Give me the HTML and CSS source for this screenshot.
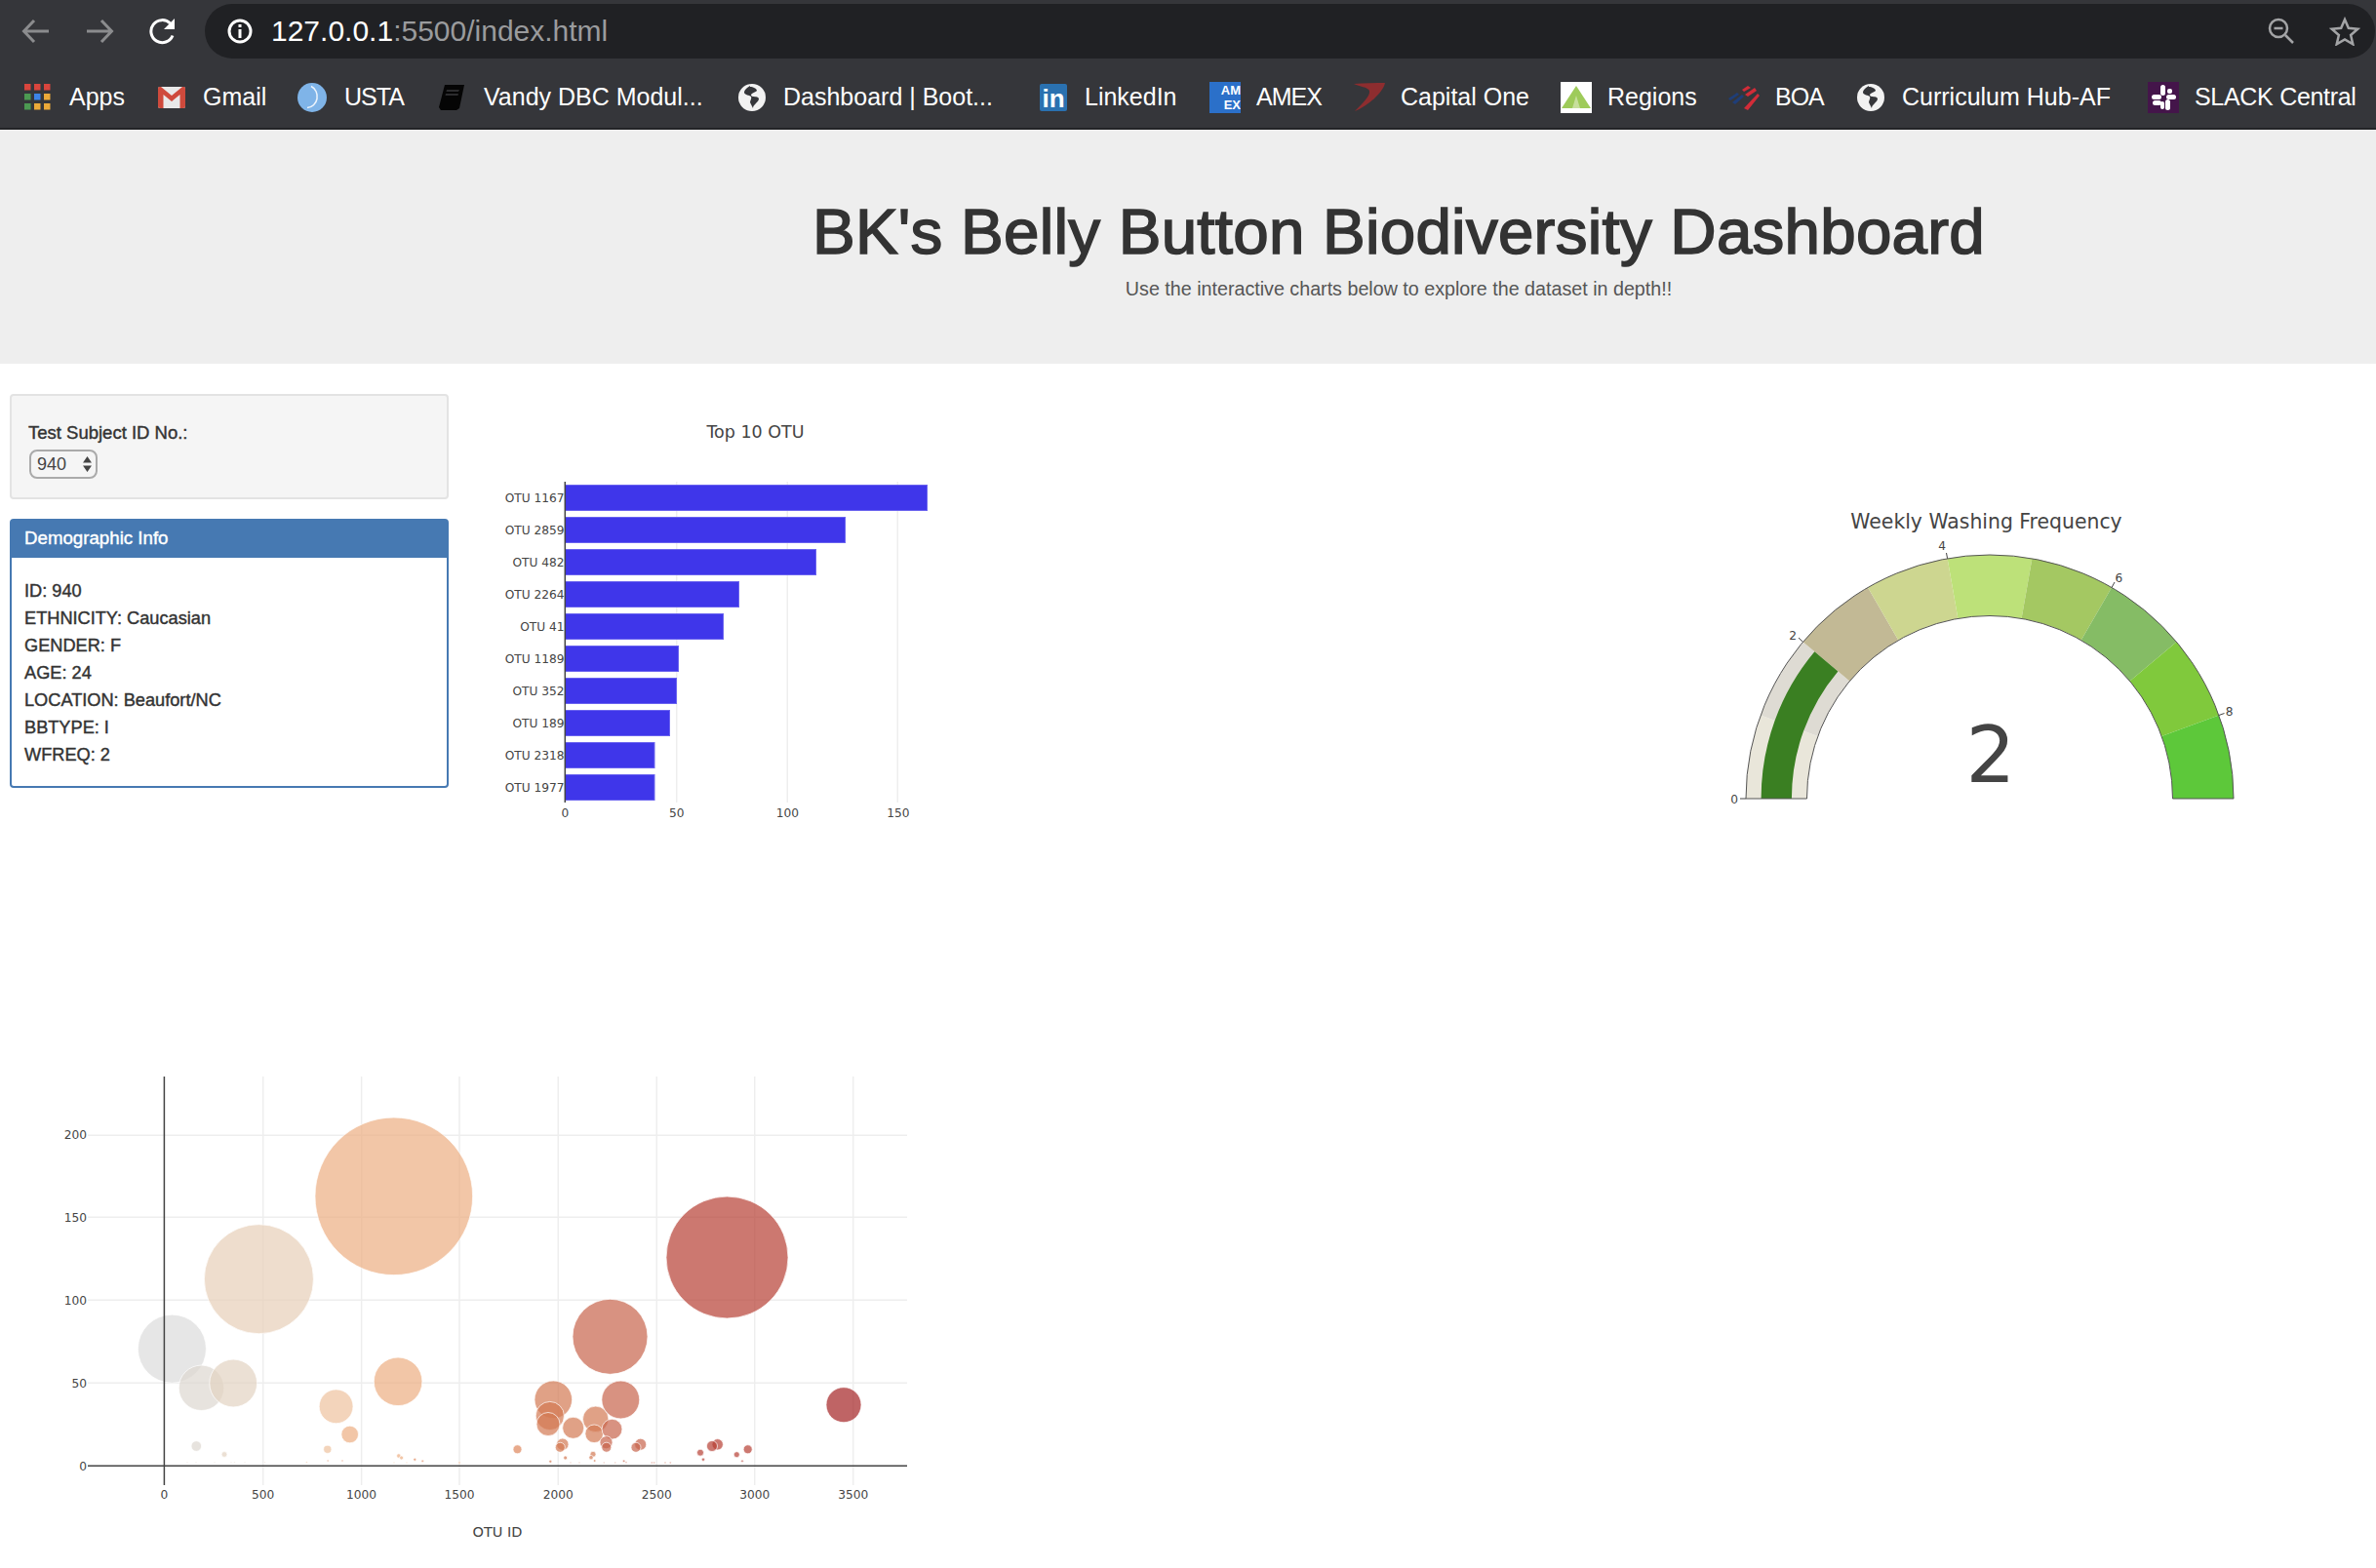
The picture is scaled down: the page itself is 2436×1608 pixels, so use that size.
FILE: index.html
```html
<!DOCTYPE html>
<html lang="en">
<head>
<meta charset="UTF-8">
<meta name="viewport" content="width=device-width, initial-scale=1.0">
<title>Belly Button Biodiversity</title>
<link rel="stylesheet" href="styles.css">
</head>
<body>

<div class="toolbar">
    <svg class="nav-icon" width="30" height="26" viewBox="0 0 30 26"><path class="line-dim" d="M28 13H3M13 2 2.500 13 13 24"/></svg>
    <svg class="nav-icon nav-fwd" width="30" height="26" viewBox="0 0 30 26"><path class="line-dim" d="M2 13H27M17 2 27.500 13 17 24"/></svg>
    <svg class="nav-icon nav-reload" width="30" height="28" viewBox="0 0 30 28"><path class="line-white" d="M25 18.500A11.500 11.500 0 1 1 22.500 6"/><path class="fill-white" d="M27 1V12H16Z"/></svg>
    <div class="omnibox">
        <svg class="info-icon" width="28" height="28" viewBox="0 0 28 28"><circle class="line-white" cx="14" cy="14" r="11"/><path class="fill-white" d="M12.500 12h3v9h-3zM12.500 7h3v3h-3z"/></svg>
        <span class="url">127.0.0.1<span class="url-dim">:5500/index.html</span></span>
        <svg class="zoom-icon" width="30" height="30" viewBox="0 0 30 30"><circle class="line-grey" cx="12" cy="12" r="9"/><path class="line-grey" d="M7.500 12h9M19 19l8 8"/></svg>
        <svg class="star-icon" width="32" height="30" viewBox="0 0 32 30"><path class="line-grey" d="M16 3l3.800 8.800 9.500.9-7.200 6.300 2.200 9.300-8.300-4.900-8.300 4.900 2.200-9.300-7.200-6.300 9.500-.9z"/></svg>
    </div>
</div>

<div class="bookmarks">
    <a class="bm">
        <svg width="28" height="28" viewBox="0 0 28 28">
            <rect class="a-red" x="0" y="0" width="6.500" height="6.500"/><rect class="a-red" x="10" y="0" width="6.500" height="6.500"/><rect class="a-red" x="20" y="0" width="6.500" height="6.500"/>
            <rect class="a-green" x="0" y="10" width="6.500" height="6.500"/><rect class="a-blue" x="10" y="10" width="6.500" height="6.500"/><rect class="a-orange" x="20" y="10" width="6.500" height="6.500"/>
            <rect class="a-green" x="0" y="20" width="6.500" height="6.500"/><rect class="a-orange" x="10" y="20" width="6.500" height="6.500"/><rect class="a-orange" x="20" y="20" width="6.500" height="6.500"/>
        </svg>
        Apps
    </a>
    <a class="bm">
        <svg width="28" height="22" viewBox="0 0 28 22"><rect x="0" y="0" width="28" height="22" rx="2" fill="#e9e9e9"/><path d="M0 2C0 .5 1 0 2 0H3L14 9 25 0H26C27 0 28 .5 28 2V20C28 21 27 22 26 22H22.500V8L14 15 5.500 8V22H2C1 22 0 21 0 20Z" fill="#cf4a3c"/></svg>
        Gmail
    </a>
    <a class="bm bm-caps">
        <svg width="30" height="30" viewBox="0 0 30 30"><circle cx="15" cy="15" r="15" fill="#7fb4e8"/><path d="M14 3.500A10.500 11.500 0 0 1 10 25.500" fill="none" stroke="#eef5fc" stroke-width="1.500"/></svg>
        USTA
    </a>
    <a class="bm bm-book">
        <svg width="26" height="26" viewBox="0 0 26 26"><path d="M6 0H26L21 24 18 26H2L0 23Z" fill="#050505"/><path d="M8 5H21L20 7H7.500ZM7 9H20L19.500 11H6.500Z" fill="#2c2c2e"/></svg>
        Vandy DBC Modul...
    </a>
    <a class="bm">
        <svg width="28" height="28" viewBox="0 0 28 28"><circle cx="14" cy="14" r="14" fill="#f2f2f2"/><path d="M12 2C9 4 6 6 6 9c1 3 5 2 7 4 1 2-1 4-1 6l3 6c0-4 6-6 6-10-2-3-6-1-8-3 0-3 4-3 6-5 0-2-4-4-7-4Z" fill="#35363a"/></svg>
        Dashboard | Boot...
    </a>
    <a class="bm">
        <span class="in-icon">in</span>
        LinkedIn
    </a>
    <a class="bm bm-sq bm-caps">
        <span class="amex-icon">AM<br>EX</span>
        AMEX
    </a>
    <a class="bm bm-sq">
        <svg width="32" height="30" viewBox="0 0 32 30"><path d="M0 1C10 0 22 0 32 0 30 10 14 24 1 29 10 20 17 13 16 8 14 4 6 4 0 1Z" fill="#8d2d2f"/></svg>
        Capital One
    </a>
    <a class="bm bm-sq">
        <svg width="32" height="32" viewBox="0 0 32 32"><rect width="32" height="32" fill="#fff"/><path d="M16 4 31 27H1Z" fill="#9ecb5a"/><path d="M16 14 20 27H12Z" fill="#c7df9c"/></svg>
        Regions
    </a>
    <a class="bm bm-sq bm-caps">
        <svg width="32" height="26" viewBox="0 0 32 26"><path d="M0 14 9 8 11 10 2 16Z" fill="#1f3e78"/><path d="M4 18 14 10 16 12 7 20Z" fill="#1f3e78"/><path d="M14 5 20 1 23 3 16 7ZM17 10 27 3 29 6 20 12ZM16 24 30 9 32 11 20 26Z" fill="#d22c38"/></svg>
        BOA
    </a>
    <a class="bm">
        <svg width="28" height="28" viewBox="0 0 28 28"><circle cx="14" cy="14" r="14" fill="#f2f2f2"/><path d="M12 2C9 4 6 6 6 9c1 3 5 2 7 4 1 2-1 4-1 6l3 6c0-4 6-6 6-10-2-3-6-1-8-3 0-3 4-3 6-5 0-2-4-4-7-4Z" fill="#35363a"/></svg>
        Curriculum Hub-AF
    </a>
    <a class="bm bm-sq bm-slack">
        <svg width="32" height="32" viewBox="0 0 32 32"><rect width="32" height="32" fill="#44154a"/><g fill="#fff"><rect x="13" y="3" width="5" height="11" rx="2.500"/><rect x="18" y="18" width="5" height="11" rx="2.500"/><rect x="4" y="13" width="10" height="5" rx="2.500"/><rect x="19" y="13" width="10" height="5" rx="2.500"/><rect x="5" y="19" width="9" height="5" rx="2.500"/><rect x="20" y="7" width="5" height="5" rx="2"/><rect x="13" y="20" width="4" height="8" rx="2"/></g></svg>
        SLACK Central
    </a>
</div>

<div class="jumbotron">
    <h1>BK's Belly Button Biodiversity Dashboard</h1>
    <p>Use the interactive charts below to explore the dataset in depth!!</p>
</div>

<div class="top-row">
    <div class="side">
        <div class="well">
            <label for="selDataset">Test Subject ID No.:</label>
            <div class="fake-select" id="selDataset">940
                <svg width="9" height="16" viewBox="0 0 9 16"><path class="arrow" d="M4.500 0 9 6.500H0ZM4.500 16 0 9.500H9Z"/></svg>
            </div>
        </div>
        <div class="panel">
            <div class="panel-heading">Demographic Info</div>
            <div class="panel-body">
                <p>ID: 940</p>
                <p>ETHNICITY: Caucasian</p>
                <p>GENDER: F</p>
                <p>AGE: 24</p>
                <p>LOCATION: Beaufort/NC</p>
                <p>BBTYPE: I</p>
                <p>WFREQ: 2</p>
            </div>
        </div>
    </div>

    <!-- top 10 bars, 1 unit = 2.273px -->
    <svg class="bar-chart" width="490" height="450" viewBox="490 410 490 450">
        <path class="grid" d="M693.700 494V823M807.300 494V823M920.300 494V823"/>
        <g class="bar">
            <rect x="579.500" y="497.500" width="371" height="26"/>
            <rect x="579.500" y="530.500" width="287" height="26"/>
            <rect x="579.500" y="563.500" width="257" height="26"/>
            <rect x="579.500" y="596.500" width="178" height="26"/>
            <rect x="579.500" y="629.500" width="162" height="26"/>
            <rect x="579.500" y="662.500" width="116" height="26"/>
            <rect x="579.500" y="695.500" width="114" height="26"/>
            <rect x="579.500" y="728.500" width="107" height="26"/>
            <rect x="579.500" y="761.500" width="91.500" height="26"/>
            <rect x="579.500" y="794.500" width="91.500" height="26"/>
        </g>
        <path class="axis" d="M579.300 494V823"/>
        <text class="chart-title" x="774.500" y="449" text-anchor="middle">Top 10 OTU</text>
        <g class="tick" text-anchor="end">
            <text x="578.500" y="515">OTU 1167</text>
            <text x="578.500" y="548">OTU 2859</text>
            <text x="578.500" y="581">OTU 482</text>
            <text x="578.500" y="614">OTU 2264</text>
            <text x="578.500" y="647">OTU 41</text>
            <text x="578.500" y="680">OTU 1189</text>
            <text x="578.500" y="713">OTU 352</text>
            <text x="578.500" y="746">OTU 189</text>
            <text x="578.500" y="779">OTU 2318</text>
            <text x="578.500" y="812">OTU 1977</text>
        </g>
        <g class="tick" text-anchor="middle">
            <text x="579.500" y="838">0</text>
            <text x="693.700" y="838">50</text>
            <text x="807.300" y="838">100</text>
            <text x="921" y="838">150</text>
        </g>
    </svg>

    <!-- gauge, origin at the centre of the half circle -->
    <svg class="gauge" width="580" height="350" viewBox="-290 -319 580 350">
        <path class="s1" d="M-250 0A250 250 0 0 1-234.900-85.500L-176.200-64.100A187.500 187.500 0 0 0-187.500 0Z"/>
        <path class="s2" d="M-234.900-85.500A250 250 0 0 1-191.500-160.700L-143.600-120.500A187.500 187.500 0 0 0-176.200-64.100Z"/>
        <path class="s3" d="M-191.500-160.700A250 250 0 0 1-125-216.500L-93.750-162.400A187.500 187.500 0 0 0-143.600-120.500Z"/>
        <path class="s4" d="M-125-216.500A250 250 0 0 1-43.400-246.200L-32.600-184.700A187.500 187.500 0 0 0-93.750-162.400Z"/>
        <path class="s5" d="M-43.400-246.200A250 250 0 0 1 43.400-246.200L32.600-184.700A187.500 187.500 0 0 0-32.600-184.700Z"/>
        <path class="s6" d="M43.400-246.200A250 250 0 0 1 125-216.500L93.750-162.400A187.500 187.500 0 0 0 32.600-184.700Z"/>
        <path class="s7" d="M125-216.500A250 250 0 0 1 191.500-160.700L143.600-120.500A187.500 187.500 0 0 0 93.750-162.400Z"/>
        <path class="s8" d="M191.500-160.700A250 250 0 0 1 234.900-85.500L176.200-64.100A187.500 187.500 0 0 0 143.600-120.500Z"/>
        <path class="s9" d="M234.900-85.500A250 250 0 0 1 250 0L187.500 0A187.500 187.500 0 0 0 176.200-64.100Z"/>
        <path class="gauge-bar" d="M-234.400 0A234.400 234.400 0 0 1-179.600-150.700L-155.600-130.500A203.100 203.100 0 0 0-203.100 0Z"/>
        <path class="gauge-edge" d="M-250 0A250 250 0 0 1 250 0L187.500 0A187.500 187.500 0 0 0-187.500 0Z"/>
        <path class="gauge-ticks" d="M-250 0H-256M-191.500-160.700-196-165M-43.400-246.200-44.500-252M125-216.500 128-222M234.900-85.500 240.500-87.500"/>
        <text class="gauge-title" x="-3.500" y="-277" text-anchor="middle">Weekly Washing Frequency</text>
        <g class="tick" text-anchor="middle">
            <text x="-262" y="5">0</text>
            <text x="-202" y="-163">2</text>
            <text x="-49" y="-255">4</text>
            <text x="132.500" y="-222">6</text>
            <text x="245.700" y="-85">8</text>
        </g>
        <text class="gauge-value" x="1" y="-17" text-anchor="middle">2</text>
    </svg>
</div>

<!-- bubbles: x(v) = 168.4 + v * 0.2019, y(v) = 1503.3 - v * 1.695 -->
<svg class="bubble-chart" width="960" height="518" viewBox="0 1090 960 518">
    <path class="grid" d="M269.700 1104V1523M370.600 1104V1523M471 1104V1523M572.300 1104V1523M673.300 1104V1523M773.700 1104V1523M874.700 1104V1523M90 1164.300H930M90 1248.300H930M90 1333.300H930M90 1418.300H930"/>
    <g class="bubbles">
        <circle class="b1" cx="176.400" cy="1383.200" r="35"/>
        <circle class="b2" cx="206.500" cy="1423.300" r="23.200"/>
        <circle class="b3" cx="239.200" cy="1418.500" r="24.400"/>
        <circle class="b4" cx="265.400" cy="1311.700" r="56"/>
        <circle class="b2" cx="201.300" cy="1483" r="5.300"/>
        <circle class="b3" cx="230" cy="1491.500" r="2.900"/>
        <circle class="b5" cx="344.600" cy="1442.300" r="17.400"/>
        <circle class="b5" cx="335.800" cy="1486.300" r="4.100"/>
        <circle class="b6" cx="358.700" cy="1471" r="8.800"/>
        <circle class="b6" cx="403.800" cy="1226.800" r="80.800"/>
        <circle class="b6" cx="408.100" cy="1416.800" r="24.800"/>
        <circle class="b6" cx="408.800" cy="1493" r="2.200"/>
        <circle class="b6" cx="411.600" cy="1495" r="2"/>
        <circle class="b7" cx="425.300" cy="1496.700" r="1.500"/>
        <circle class="b7" cx="433.200" cy="1498.300" r="1.200"/>
        <circle class="b7" cx="336.100" cy="1498" r="1"/>
        <circle class="b7" cx="351" cy="1498" r="1"/>
        <circle class="b6" cx="471" cy="1500" r="1.200"/>
        <circle class="b6" cx="404" cy="1500" r=".8"/>
        <circle class="b6" cx="417" cy="1500" r=".8"/>
        <circle class="b3" cx="192" cy="1499.700" r=".8"/>
        <circle class="b3" cx="201" cy="1499.700" r=".8"/>
        <circle class="b3" cx="220" cy="1499.700" r=".8"/>
        <circle class="b3" cx="237" cy="1499.700" r=".8"/>
        <circle class="b3" cx="240.400" cy="1499.700" r=".8"/>
        <circle class="b3" cx="251" cy="1499.700" r=".8"/>
        <circle class="b4" cx="271.400" cy="1499.700" r=".8"/>
        <circle class="b5" cx="314.400" cy="1499.700" r=".9"/>
        <circle class="b7" cx="530.500" cy="1486.300" r="4.500"/>
        <circle class="b8" cx="567.300" cy="1435.300" r="19.300"/>
        <circle class="b8" cx="563.800" cy="1452" r="14.600"/>
        <circle class="b8" cx="562" cy="1460.500" r="12"/>
        <circle class="b8" cx="587.700" cy="1464.300" r="11"/>
        <circle class="b8" cx="610.700" cy="1455.300" r="13.200"/>
        <circle class="b8" cx="609.200" cy="1470.300" r="9.300"/>
        <circle class="b9" cx="627.500" cy="1465.700" r="10.400"/>
        <circle class="b9" cx="636.300" cy="1435.500" r="19.400"/>
        <circle class="b9" cx="625.500" cy="1370.800" r="38.500"/>
        <circle class="b9" cx="621.500" cy="1479.200" r="6.500"/>
        <circle class="b9" cx="621.800" cy="1484.200" r="5"/>
        <circle class="b8" cx="576.800" cy="1481.200" r="6.200"/>
        <circle class="b8" cx="574.300" cy="1484.300" r="5"/>
        <circle class="b9" cx="656.700" cy="1481.200" r="6"/>
        <circle class="b9" cx="652" cy="1484.300" r="5"/>
        <circle class="b8" cx="608" cy="1491.300" r="3"/>
        <circle class="b8" cx="606" cy="1494.700" r="2.200"/>
        <circle class="b8" cx="579.700" cy="1495" r="2"/>
        <circle class="b8" cx="564.300" cy="1498.700" r="1.500"/>
        <circle class="b8" cx="585" cy="1500" r=".8"/>
        <circle class="b8" cx="594" cy="1500" r=".8"/>
        <circle class="b8" cx="609.700" cy="1498" r="1.300"/>
        <circle class="b9" cx="619.300" cy="1500" r=".8"/>
        <circle class="b9" cx="630.700" cy="1500" r=".8"/>
        <circle class="b9" cx="639.700" cy="1498.300" r="1.200"/>
        <circle class="b9" cx="642" cy="1499.700" r=".9"/>
        <circle class="b9" cx="668.300" cy="1500" r=".9"/>
        <circle class="b9" cx="670.700" cy="1500" r=".9"/>
        <circle class="b9" cx="682" cy="1500" r=".9"/>
        <circle class="b9" cx="687.300" cy="1500" r=".9"/>
        <circle class="b10" cx="745.500" cy="1289.500" r="62.500"/>
        <circle class="b10" cx="718" cy="1489.700" r="3.500"/>
        <circle class="b10" cx="721" cy="1496.700" r="1.700"/>
        <circle class="b10" cx="735.700" cy="1481.300" r="5.700"/>
        <circle class="b10" cx="730" cy="1483" r="5.500"/>
        <circle class="b10" cx="755.300" cy="1491.700" r="3"/>
        <circle class="b10" cx="766.700" cy="1486.300" r="4.500"/>
        <circle class="b10" cx="761" cy="1498.300" r="1.200"/>
        <circle class="b11" cx="865" cy="1440.700" r="18"/>
    </g>
    <path class="axis" d="M168.400 1104V1523M90 1503.300H930"/>
    <g class="tick" text-anchor="end">
        <text x="89" y="1168">200</text>
        <text x="89" y="1252.500">150</text>
        <text x="89" y="1337.500">100</text>
        <text x="89" y="1422.500">50</text>
        <text x="89" y="1507.500">0</text>
    </g>
    <g class="tick" text-anchor="middle">
        <text x="168.400" y="1537">0</text>
        <text x="269.700" y="1537">500</text>
        <text x="370.600" y="1537">1000</text>
        <text x="471" y="1537">1500</text>
        <text x="572.300" y="1537">2000</text>
        <text x="673.300" y="1537">2500</text>
        <text x="773.700" y="1537">3000</text>
        <text x="874.700" y="1537">3500</text>
    </g>
    <text class="axis-title" x="510" y="1576" text-anchor="middle">OTU ID</text>
</svg>

</body>
</html>
```

FILE: styles.css
```css
* {
    box-sizing: border-box;
}
body {
    margin: 0;
    font-family: "Liberation Sans", Arial, sans-serif;
    color: #333;
    background: #fff;
}

/* browser bar */
.toolbar {
    height: 64px;
    background: #35363a;
    display: flex;
    align-items: center;
    padding: 0 1px 0 22px;
}
.nav-icon {
    flex: none;
}
.nav-fwd {
    margin-left: 35px;
}
.nav-reload {
    margin-left: 35px;
    margin-right: 28px;
}
.line-dim {
    fill: none;
    stroke: #8b8c8e;
    stroke-width: 3;
}
.line-white {
    fill: none;
    stroke: #fff;
    stroke-width: 3;
}
.fill-white {
    fill: #fff;
}
.line-grey {
    fill: none;
    stroke: #a3a4a6;
    stroke-width: 2.500;
}
.omnibox {
    flex: 1;
    height: 56px;
    background: #202124;
    border-radius: 28px;
    display: flex;
    align-items: center;
    padding: 0 15px 0 22px;
}
.info-icon {
    flex: none;
}
.url {
    margin-left: 18px;
    font-size: 30px;
    color: #fff;
    flex: 1;
}
.url-dim {
    color: #9a9b9d;
}
.zoom-icon {
    margin-right: 34px;
}

.bookmarks {
    height: 69px;
    background: #35363a;
    border-bottom: 2px solid #232427;
    display: grid;
    grid-template-columns: 137px 143px 145px 307px 309px 174px 148px 212px 172px 132px 298px auto;
    align-items: center;
    padding: 4px 0 0 25px;
    white-space: nowrap;
}
.bm {
    display: flex;
    align-items: center;
    gap: 18px;
    color: #fff;
    font-size: 25px;
}
.bm-sq {
    gap: 16px;
}
.bm-book {
    gap: 20px;
}
.bm-caps {
    letter-spacing: -1px;
}
.bm-slack {
    letter-spacing: -.3px;
}
.a-red {
    fill: #d9453d;
}
.a-green {
    fill: #4c9a52;
}
.a-blue {
    fill: #3d83e6;
}
.a-orange {
    fill: #eba938;
}
.in-icon {
    width: 28px;
    height: 28px;
    background: #2a71b0;
    color: #fff;
    font-weight: bold;
    font-size: 26px;
    line-height: 30px;
    text-align: center;
    border-radius: 2px;
}
.amex-icon {
    width: 32px;
    height: 32px;
    background: #2b70c9;
    color: #fff;
    font-weight: bold;
    font-size: 13px;
    line-height: 15px;
    letter-spacing: 0;
    padding-top: 1px;
    text-align: right;
    overflow: hidden;
}

/* page header */
.jumbotron {
    height: 240px;
    background: #eee;
    padding: 67px 0 0 432px;
    text-align: center;
}
.jumbotron h1 {
    margin: 0;
    font-size: 65.500px;
    line-height: 76px;
    letter-spacing: .25px;
    font-weight: normal;
    color: #333;
    -webkit-text-stroke: 1.600px #333;
}
.jumbotron p {
    margin: 6px 0 0;
    font-size: 19.700px;
    line-height: 28px;
    color: #555;
}

.top-row {
    display: flex;
    height: 717px;
}
.side {
    width: 450px;
    margin: 31px 30px 0 10px;
    flex: none;
}
.well {
    height: 108px;
    background: #f5f5f5;
    border: 2px solid #e3e3e3;
    border-radius: 4px;
    padding: 25px 17px 0;
    margin-bottom: 20px;
}
.well label {
    display: block;
    font-size: 18.500px;
    line-height: 26px;
    -webkit-text-stroke: .4px #333;
}
.fake-select {
    margin: 4px 0 0 1px;
    width: 70px;
    height: 30px;
    border: 2px solid #aaa;
    border-radius: 8px;
    font-size: 18px;
    line-height: 26px;
    padding-left: 6px;
    color: #444;
    position: relative;
}
.fake-select svg {
    position: absolute;
    right: 4px;
    top: 5px;
}
.arrow {
    fill: #444;
}
.panel {
    height: 276px;
    border: 2px solid #4679b2;
    border-radius: 4px;
}
.panel-heading {
    height: 38px;
    background: #4679b2;
    color: #fff;
    font-size: 18.700px;
    line-height: 36px;
    padding-left: 13px;
    -webkit-text-stroke: .4px #fff;
}
.panel-body {
    padding: 20px 13px 0;
    font-size: 18.200px;
    line-height: 28px;
    -webkit-text-stroke: .4px #333;
}
.panel-body p {
    margin: 0;
}

/* plots */
.bar-chart {
    flex: none;
    margin-top: 37px;
}
.gauge {
    flex: none;
    margin: 127px 0 0 770px;
}
.bubble-chart {
    display: block;
}
.grid {
    fill: none;
    stroke: #eee;
    stroke-width: 1.500;
}
.axis {
    fill: none;
    stroke: #444;
    stroke-width: 1.500;
}
.bar rect {
    fill: #3f36ea;
    stroke: #6a63ef;
    stroke-width: 1;
}
.tick text {
    font-family: "DejaVu Sans", Verdana, sans-serif;
    font-size: 12.200px;
    fill: #444;
}
.chart-title {
    font-family: "DejaVu Sans", Verdana, sans-serif;
    font-size: 17.500px;
    fill: #444;
}
.axis-title {
    font-family: "DejaVu Sans", Verdana, sans-serif;
    font-size: 14.500px;
    fill: #444;
}

/* gauge */
.s1 { fill: #e9e6da; }
.s2 { fill: #dedbd3; }
.s3 { fill: #c2b995; }
.s4 { fill: #cdd690; }
.s5 { fill: #bde179; }
.s6 { fill: #a4c862; }
.s7 { fill: #85bc65; }
.s8 { fill: #80c93c; }
.s9 { fill: #5dc83a; }
.gauge-bar {
    fill: #3a7f22;
}
.gauge-edge {
    fill: none;
    stroke: #555;
    stroke-width: 1;
}
.gauge-ticks {
    fill: none;
    stroke: #444;
    stroke-width: 1;
}
.gauge-title {
    font-family: "DejaVu Sans", Verdana, sans-serif;
    font-size: 20.400px;
    fill: #444;
}
.gauge-value {
    font-family: "DejaVu Sans", Verdana, sans-serif;
    font-size: 80px;
    fill: #444;
}

/* bubbles */
.bubbles circle {
    fill-opacity: .7;
    stroke: #fff;
    stroke-width: .7;
}
.b1 { fill: rgb(219, 219, 219); }
.b2 { fill: rgb(221, 215, 208); }
.b3 { fill: rgb(226, 211, 194); }
.b4 { fill: rgb(231, 206, 184); }
.b5 { fill: rgb(238, 194, 158); }
.b6 { fill: rgb(236, 174, 129); }
.b7 { fill: rgb(222, 134, 91); }
.b8 { fill: rgb(211, 121, 82); }
.b9 { fill: rgb(200, 100, 75); }
.b10 { fill: rgb(182, 62, 51); }
.b11 { fill: rgb(164, 34, 36); }
```
